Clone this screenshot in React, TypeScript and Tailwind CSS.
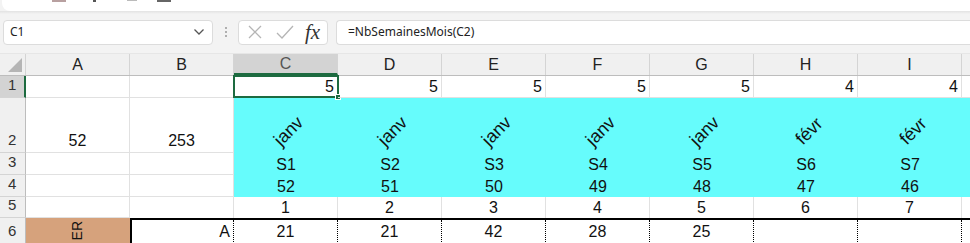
import React from "react";

const COLS = ["A", "B", "C", "D", "E", "F", "G", "H", "I"];
const font = { fontFamily: '"Liberation Sans", Arial, sans-serif' };

function Cell({
  children,
  className = "",
}: {
  children?: React.ReactNode;
  className?: string;
}) {
  return (
    <div
      className={`w-[104px] shrink-0 border-r border-b border-[#e1e1e1] text-[16px] leading-[20px] text-[#111] ${className}`}
    >
      {children}
    </div>
  );
}

function RowHead({ n, h, sel = false }: { n: number; h: string; sel?: boolean }) {
  return (
    <div
      className={`w-[26px] shrink-0 ${h} flex items-end pl-[8px] pb-[1px] text-[15px] text-[#333] border-b border-[#d4d4d4] ${
        sel ? "bg-[#d3d3d3] border-r-2 border-r-[#1d6b40]" : "bg-[#f0f0f0] border-r border-r-[#bdbdbd]"
      }`}
    >
      {n}
    </div>
  );
}

const months = ["janv", "janv", "janv", "janv", "janv", "févr", "févr"];
const s = ["S1", "S2", "S3", "S4", "S5", "S6", "S7"];
const w = ["52", "51", "50", "49", "48", "47", "46"];
const r1 = ["5", "5", "5", "5", "5", "4", "4"];
const r6 = ["21", "21", "42", "28", "25", "", ""];

export default function App() {
  return (
    <div className="w-[970px] h-[243px] overflow-hidden bg-[#f3f3f3] relative" style={font}>
      {/* ribbon remnant */}
      <div className="h-[11px] bg-white rounded-bl-[8px] ml-[2px] relative">
        <div className="absolute top-0 left-[50px] w-[14px] h-[2px] bg-[#b8a0a0]" />
        <div className="absolute top-0 left-[91px] w-[3px] h-[2px] bg-[#555]" />
        <div className="absolute top-0 left-[125px] w-[10px] h-[1px] bg-[#bbb]" />
        <div className="absolute top-0 left-[155px] w-[14px] h-[2px] bg-[#666]" />
      </div>
      <div className="h-[3px] bg-gradient-to-b from-[#e2e2e2] to-[#f3f3f3]" />

      {/* formula bar */}
      <div className="h-[39px] flex items-center pb-[3px]">
        <div className="ml-[3px] w-[210px] h-[25px] bg-white border border-[#dcdcdc] rounded-[4px] flex items-center justify-between px-[6px]">
          <span className="text-[12px] text-[#222]" style={{ fontFamily: '"Noto Sans", sans-serif' }}>
            C1
          </span>
          <svg width="12" height="8" viewBox="0 0 12 8" className="mr-[1px]">
            <path d="M1.5 1.5 L6 6 L10.5 1.5" fill="none" stroke="#555" strokeWidth="1.3" />
          </svg>
        </div>
        <div className="w-[25px] flex flex-col items-center gap-[2px]">
          <div className="w-[2px] h-[2px] bg-[#999] rounded-full" />
          <div className="w-[2px] h-[2px] bg-[#999] rounded-full" />
          <div className="w-[2px] h-[2px] bg-[#999] rounded-full" />
        </div>
        <div className="w-[90px] h-[25px] bg-white border border-[#dcdcdc] rounded-[4px] flex items-center">
          <svg width="16" height="16" viewBox="0 0 16 16" className="ml-[8px]">
            <path d="M2 2 L14 14 M14 2 L2 14" stroke="#b5b5b5" strokeWidth="1.3" />
          </svg>
          <svg width="18" height="16" viewBox="0 0 18 16" className="ml-[13px]">
            <path d="M1 9 L6 14 L17 2" fill="none" stroke="#b5b5b5" strokeWidth="1.3" />
          </svg>
          <span
            className="ml-[11px] text-[21px] italic text-[#333] leading-none"
            style={{ fontFamily: '"Liberation Serif", "Times New Roman", serif' }}
          >
            fx
          </span>
        </div>
        <div className="ml-[8px] flex-1 h-[25px] bg-white border border-[#dcdcdc] border-r-0 rounded-l-[4px] flex items-center pl-[11px]">
          <span className="text-[12px] text-[#222]" style={{ fontFamily: '"Noto Sans", sans-serif' }}>
            =NbSemainesMois(C2)
          </span>
        </div>
      </div>

      {/* column headers */}
      <div className="flex h-[23px] bg-[#f0f0f0] border-b border-[#bdbdbd] border-t border-t-[#e6e6e6]">
        <div className="w-[26px] shrink-0 border-r border-[#d4d4d4] relative">
          <svg width="14" height="14" viewBox="0 0 14 14" className="absolute right-[3px] bottom-[3px]">
            <path d="M14 0 L14 14 L0 14 Z" fill="#b5b5b5" />
          </svg>
        </div>
        {COLS.map((c) => (
          <div
            key={c}
            className={`w-[104px] shrink-0 flex items-center justify-center text-[16px] border-r border-[#d4d4d4] ${
              c === "C" ? "bg-[#d3d3d3] text-[#555] border-b-2 border-b-[#1d6b40]" : "text-[#222]"
            }`}
          >
            {c}
          </div>
        ))}
        <div className="flex-1" />
      </div>

      <div className="bg-white">
        {/* row 1 */}
        <div className="flex h-[22px]">
          <RowHead n={1} h="h-[22px]" sel />
          <Cell className="h-[22px]" />
          <Cell className="h-[22px]" />
          {r1.map((v, i) => (
            <Cell key={i} className={`h-[22px] flex items-end justify-end pr-[3px] relative`}>
              {v}
              {i === 0 && (
                <div className="absolute -left-[1px] -top-[1px] w-[106px] h-[23px] border-2 border-[#1d6b40]">
                  <div className="absolute -right-[4px] -bottom-[4px] w-[6px] h-[6px] bg-[#1d6b40] border border-white" />
                </div>
              )}
            </Cell>
          ))}
          <div className="flex-1 border-b border-[#e1e1e1]" />
        </div>

        {/* row 2 */}
        <div className="flex h-[55px]">
          <RowHead n={2} h="h-[55px]" />
          <Cell className="h-[55px] flex items-end justify-center pb-[1px]">52</Cell>
          <Cell className="h-[55px] flex items-end justify-center pb-[1px]">253</Cell>
          {months.map((m, i) => (
            <div
              key={i}
              className="w-[104px] shrink-0 h-[55px] bg-[#66fcfc] flex items-end justify-center pb-[13px] pl-[6px] text-[18px] leading-none text-[#111]"
            >
              <span className="inline-block -rotate-45">{m}</span>
            </div>
          ))}
          <div className="flex-1 bg-[#66fcfc]" />
        </div>

        {/* row 3 */}
        <div className="flex h-[22px]">
          <RowHead n={3} h="h-[22px]" />
          <Cell className="h-[22px]" />
          <Cell className="h-[22px]" />
          {s.map((v, i) => (
            <div key={i} className="w-[104px] shrink-0 h-[22px] bg-[#66fcfc] flex items-end justify-center text-[16px] leading-[20px] text-[#111]">
              {v}
            </div>
          ))}
          <div className="flex-1 bg-[#66fcfc]" />
        </div>

        {/* row 4 */}
        <div className="flex h-[22px]">
          <RowHead n={4} h="h-[22px]" />
          <Cell className="h-[22px]" />
          <Cell className="h-[22px]" />
          {w.map((v, i) => (
            <div key={i} className="w-[104px] shrink-0 h-[22px] bg-[#66fcfc] flex items-end justify-center text-[16px] leading-[20px] text-[#111]">
              {v}
            </div>
          ))}
          <div className="flex-1 bg-[#66fcfc]" />
        </div>

        {/* row 5 */}
        <div className="flex h-[21px]">
          <RowHead n={5} h="h-[21px]" />
          <Cell className="h-[21px]" />
          <div className="w-[104px] shrink-0 h-[21px] border-r border-[#e1e1e1]" />
          {[1, 2, 3, 4, 5, 6, 7].map((v) => (
            <div key={v} className="w-[104px] shrink-0 h-[21px] border-r border-[#e1e1e1] flex items-end justify-center text-[16px] leading-[20px] text-[#111]">
              {v}
            </div>
          ))}
          <div className="flex-1" />
        </div>

        {/* row 6 */}
        <div className="flex h-[26px]">
          <RowHead n={6} h="h-[26px]" />
          <div className="w-[104px] shrink-0 h-[26px] bg-[#d6a27c] relative overflow-hidden">
            <span className="absolute left-[44px] top-[3px] [writing-mode:vertical-rl] rotate-180 text-[14px] leading-[15px] text-[#111] whitespace-nowrap">
              ER
            </span>
          </div>
          <div className="flex-1 flex h-[26px] border-t-2 border-black">
            <div className="w-[104px] shrink-0 border-l-2 border-l-black border-r border-r-black border-dotted border-b border-b-black flex items-center justify-end pr-[3px] text-[16px] text-[#111]" style={{ borderTopStyle: "solid", borderLeftStyle: "solid" }}>
              A
            </div>
            {r6.map((v, i) => (
              <div key={i} className="w-[104px] shrink-0 border-r border-black border-dotted border-b flex items-center justify-center text-[16px] text-[#111]">
                {v}
              </div>
            ))}
            <div className="flex-1 border-b border-dotted border-black" />
          </div>
        </div>
      </div>
    </div>
  );
}
